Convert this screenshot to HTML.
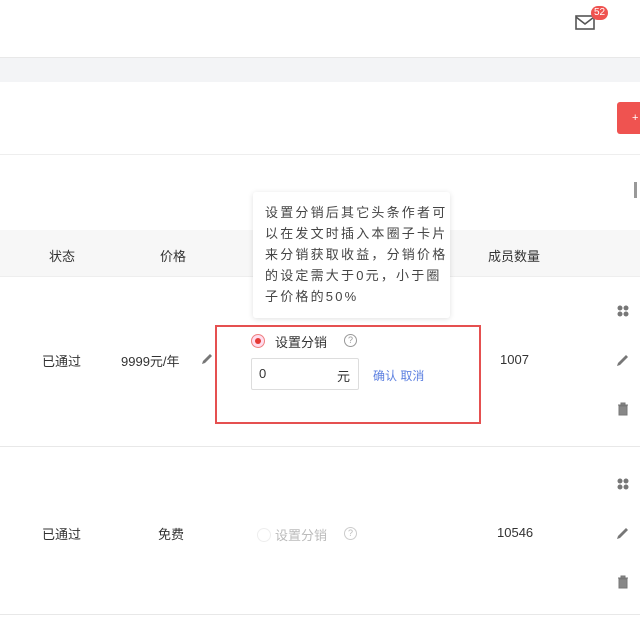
<!DOCTYPE html><html><head><meta charset="utf-8"><style>
body{margin:0;width:640px;height:617px;overflow:hidden;background:#fff;font-family:"Liberation Sans","Noto Sans CJK SC",sans-serif;color:#333;position:relative}
.a{position:absolute}
.t{font-size:13px;white-space:nowrap}
</style></head><body>
<div class="a" style="left:0;top:57px;width:640px;height:24px;background:#f3f4f6;border-top:1px solid #e8e8e8"></div>
<div class="a" style="left:0;top:154px;width:640px;height:1px;background:#eee"></div>
<div class="a" style="left:617px;top:102px;width:23px;height:32px;background:#ef5350;border-radius:3px 0 0 3px"></div>
<div class="a" style="left:632px;top:112px;width:6px;height:12px;color:#fff;font-size:11px">+</div>
<div class="a" style="left:634px;top:182px;width:3px;height:16px;background:#999"></div>
<svg class="a" style="left:574px;top:12px" width="24" height="22"><rect x="2" y="4" width="18" height="13" fill="none" stroke="#555" stroke-width="1.6"/><path d="M2 5 L11 12 L20 5" fill="none" stroke="#555" stroke-width="1.6"/></svg>
<div class="a" style="left:591px;top:6px;width:17px;height:14px;border-radius:7px;background:#ef5350;color:#fff;font-size:10px;text-align:center;line-height:14px">52</div>
<div class="a" style="left:0;top:230px;width:640px;height:46px;background:#f7f7f7;border-bottom:1px solid #eee"></div>
<div class="a t" style="left:49px;top:246px">状态</div>
<div class="a t" style="left:160px;top:246px">价格</div>
<div class="a t" style="left:488px;top:246px">成员数量</div>
<div class="a" style="left:0;top:446px;width:640px;height:1px;background:#e8e8e8"></div>
<div class="a" style="left:0;top:614px;width:640px;height:1px;background:#e8e8e8"></div>
<div class="a t" style="left:42px;top:351px">已通过</div>
<div class="a t" style="left:121px;top:351px">9999元/年</div>
<svg class="a" style="left:200px;top:352px" width="14" height="14"><path d="M2 12 L3 9 L10 2 L12 4 L5 11 Z" fill="#777"/></svg>
<div class="a t" style="left:500px;top:352px">1007</div>
<div class="a t" style="left:42px;top:524px">已通过</div>
<div class="a t" style="left:158px;top:524px">免费</div>
<div class="a t" style="left:497px;top:525px">10546</div>
<div class="a" style="left:257px;top:528px;width:12px;height:12px;border-radius:50%;border:1px solid #eee"></div>
<div class="a t" style="left:275px;top:525px;color:#bbb">设置分销</div>
<div class="a" style="left:344px;top:527px;width:11px;height:11px;border-radius:50%;border:1px solid #ccc;color:#bbb;font-size:9px;line-height:11px;text-align:center">?</div>
<div class="a" style="left:215px;top:325px;width:262px;height:95px;border:2px solid #e55050"></div>
<div class="a" style="left:251px;top:334px;width:12px;height:12px;border-radius:50%;border:1px solid #ef8080;background:#fde"></div>
<div class="a" style="left:255px;top:338px;width:6px;height:6px;border-radius:50%;background:#e53935"></div>
<div class="a t" style="left:275px;top:332px">设置分销</div>
<div class="a" style="left:344px;top:334px;width:11px;height:11px;border-radius:50%;border:1px solid #999;color:#999;font-size:9px;line-height:11px;text-align:center">?</div>
<div class="a" style="left:251px;top:358px;width:108px;height:32px;border:1px solid #ddd;box-sizing:border-box;border-radius:2px"></div>
<div class="a t" style="left:259px;top:366px">0</div>
<div class="a t" style="left:337px;top:366px">元</div>
<div class="a" style="left:373px;top:367px;font-size:12px;color:#5b7fe0">确认 取消</div>
<div class="a" style="left:253px;top:192px;width:197px;height:126px;background:#fff;box-shadow:0 1px 6px rgba(0,0,0,.12);border-radius:3px"></div>
<div class="a" style="left:265px;top:202px;font-size:13px;letter-spacing:2.2px;line-height:21px;color:#444;white-space:nowrap">设置分销后其它头条作者可<br>以在发文时插入本圈子卡片<br>来分销获取收益，分销价格<br>的设定需大于0元，小于圈<br>子价格的50%</div>
<svg class="a" style="left:616px;top:304px" width="14" height="14"><g fill="#777"><circle cx="4" cy="4" r="2.5"/><circle cx="10" cy="4" r="2.5"/><circle cx="4" cy="10" r="2.5"/><circle cx="10" cy="10" r="2.5"/></g></svg>
<svg class="a" style="left:616px;top:353px" width="14" height="14"><path d="M1 13 L2 10 L10 2 L12 4 L4 12 Z" fill="#777"/></svg>
<svg class="a" style="left:616px;top:402px" width="14" height="14"><path d="M2 3 H12 M5 3 V1 H9 V3 M3 4 H11 V13 H3 Z" fill="#888" stroke="#777"/></svg>
<svg class="a" style="left:616px;top:477px" width="14" height="14"><g fill="#777"><circle cx="4" cy="4" r="2.5"/><circle cx="10" cy="4" r="2.5"/><circle cx="4" cy="10" r="2.5"/><circle cx="10" cy="10" r="2.5"/></g></svg>
<svg class="a" style="left:616px;top:526px" width="14" height="14"><path d="M1 13 L2 10 L10 2 L12 4 L4 12 Z" fill="#777"/></svg>
<svg class="a" style="left:616px;top:575px" width="14" height="14"><path d="M2 3 H12 M5 3 V1 H9 V3 M3 4 H11 V13 H3 Z" fill="#888" stroke="#777"/></svg>
</body></html>
